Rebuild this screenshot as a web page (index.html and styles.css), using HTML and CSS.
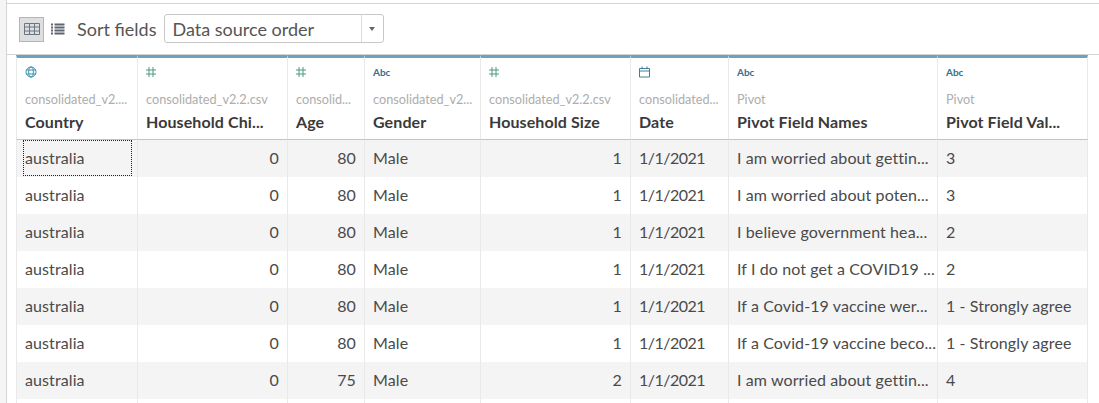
FILE: index.html
```html
<!DOCTYPE html>
<html lang="en">
<head>
    <meta charset="UTF-8">
    <title>Data source</title>
    <link rel="stylesheet" href="styles.css">
</head>
<body>

<div class="gutter"></div>

<div class="main">
    <div class="toolbar">
        <button class="view-btn active">
            <svg width="16" height="12" viewBox="0 0 16 12"><path d="M.5.5h15v11H.5zM.5 4h15M.5 8h15M5.5.5v11M10.5.5v11" fill="none" stroke="#6b7480"/></svg>
        </button>
        <button class="view-btn">
            <svg width="14" height="12" viewBox="0 0 14 12"><path d="M0 1.5h2M0 4.5h2M0 7.5h2M0 10.5h2M3.500 1.500h10M3.500 4.500h10M3.500 7.500h10M3.500 10.500h10" fill="none" stroke="#5c6570" stroke-width="2"/></svg>
        </button>
        <span class="sort-label">Sort fields</span>
        <div class="select">
            <span class="select-value">Data source order</span>
            <span class="select-arrow"></span>
        </div>
    </div>

    <div class="grid">
        <div class="col-head">
            <svg class="icon" width="12" height="12" viewBox="0 0 12 12"><g fill="none" stroke="#3f8fae"><circle cx="6" cy="6" r="5"/><ellipse cx="6" cy="6" rx="2.300" ry="5"/><path d="M1 4h10M1 8h10"/></g></svg>
            <div class="source">consolidated_v2....</div>
            <div class="name">Country</div>
        </div>
        <div class="col-head">
            <svg class="icon" width="10" height="10" viewBox="0 0 10 10"><path class="hash" d="M3 0v10M7 0v10M0 3h10M0 7h10"/></svg>
            <div class="source">consolidated_v2.2.csv</div>
            <div class="name">Household Chi...</div>
        </div>
        <div class="col-head">
            <svg class="icon" width="10" height="10" viewBox="0 0 10 10"><path class="hash" d="M3 0v10M7 0v10M0 3h10M0 7h10"/></svg>
            <div class="source">consolid...</div>
            <div class="name">Age</div>
        </div>
        <div class="col-head">
            <span class="abc">Abc</span>
            <div class="source">consolidated_v2...</div>
            <div class="name">Gender</div>
        </div>
        <div class="col-head">
            <svg class="icon" width="10" height="10" viewBox="0 0 10 10"><path class="hash" d="M3 0v10M7 0v10M0 3h10M0 7h10"/></svg>
            <div class="source">consolidated_v2.2.csv</div>
            <div class="name">Household Size</div>
        </div>
        <div class="col-head">
            <svg class="icon" width="11" height="11" viewBox="0 0 11 11"><path d="M1 2h9.500v8.500H.5V2zM.5 4.500h10M3 0v2.500M8 0v2.500" fill="none" stroke="#3f7f96"/></svg>
            <div class="source">consolidated...</div>
            <div class="name">Date</div>
        </div>
        <div class="col-head">
            <span class="abc">Abc</span>
            <div class="source">Pivot</div>
            <div class="name">Pivot Field Names</div>
        </div>
        <div class="col-head">
            <span class="abc">Abc</span>
            <div class="source">Pivot</div>
            <div class="name">Pivot Field Val...</div>
        </div>

        <div class="cell odd"><span class="focus">australia</span></div>
        <div class="cell odd num">0</div>
        <div class="cell odd num">80</div>
        <div class="cell odd">Male</div>
        <div class="cell odd num">1</div>
        <div class="cell odd date">1/1/2021</div>
        <div class="cell odd">I am worried about gettin...</div>
        <div class="cell odd">3</div>

        <div class="cell">australia</div>
        <div class="cell num">0</div>
        <div class="cell num">80</div>
        <div class="cell">Male</div>
        <div class="cell num">1</div>
        <div class="cell date">1/1/2021</div>
        <div class="cell">I am worried about poten...</div>
        <div class="cell">3</div>

        <div class="cell odd">australia</div>
        <div class="cell odd num">0</div>
        <div class="cell odd num">80</div>
        <div class="cell odd">Male</div>
        <div class="cell odd num">1</div>
        <div class="cell odd date">1/1/2021</div>
        <div class="cell odd">I believe government hea...</div>
        <div class="cell odd">2</div>

        <div class="cell">australia</div>
        <div class="cell num">0</div>
        <div class="cell num">80</div>
        <div class="cell">Male</div>
        <div class="cell num">1</div>
        <div class="cell date">1/1/2021</div>
        <div class="cell">If I do not get a COVID19 ...</div>
        <div class="cell">2</div>

        <div class="cell odd">australia</div>
        <div class="cell odd num">0</div>
        <div class="cell odd num">80</div>
        <div class="cell odd">Male</div>
        <div class="cell odd num">1</div>
        <div class="cell odd date">1/1/2021</div>
        <div class="cell odd">If a Covid-19 vaccine wer...</div>
        <div class="cell odd">1 - Strongly agree</div>

        <div class="cell">australia</div>
        <div class="cell num">0</div>
        <div class="cell num">80</div>
        <div class="cell">Male</div>
        <div class="cell num">1</div>
        <div class="cell date">1/1/2021</div>
        <div class="cell">If a Covid-19 vaccine beco...</div>
        <div class="cell">1 - Strongly agree</div>

        <div class="cell odd">australia</div>
        <div class="cell odd num">0</div>
        <div class="cell odd num">75</div>
        <div class="cell odd">Male</div>
        <div class="cell odd num">2</div>
        <div class="cell odd date">1/1/2021</div>
        <div class="cell odd">I am worried about gettin...</div>
        <div class="cell odd">4</div>

        <div class="cell"></div>
        <div class="cell"></div>
        <div class="cell"></div>
        <div class="cell"></div>
        <div class="cell"></div>
        <div class="cell"></div>
        <div class="cell"></div>
        <div class="cell"></div>
    </div>
</div>

</body>
</html>
```

FILE: styles.css
```css
* {
    margin: 0;
    padding: 0;
    box-sizing: border-box;
}

body {
    display: flex;
    height: 403px;
    overflow: hidden;
    background: #fff;
    font-family: Lato, sans-serif;
    color: #333;
}

.gutter {
    width: 7px;
    background: #f5f5f5;
    border-right: 1px solid #d4d4d4;
}

.main {
    flex: 1;
    min-width: 0;
}

/* toolbar above the grid */
.toolbar {
    height: 52px;
    margin-top: 3px;
    display: flex;
    align-items: center;
    padding: 0 0 0 12px;
    border-top: 1px solid #d4d4d4;
    border-bottom: 1px solid #d4d4d4;
}

.view-btn {
    width: 25px;
    height: 25px;
    display: flex;
    align-items: center;
    justify-content: center;
    border: 1px solid transparent;
    background: none;
}

.view-btn.active {
    background: #dcdee0;
    border-color: #b5b5b5;
}

.view-btn + .view-btn {
    margin-left: 1px;
}

.sort-label {
    margin-left: 7px;
    font-size: 18px;
    color: #555;
}

.select {
    width: 220px;
    height: 29px;
    margin: 0 0 1px 8px;
    display: flex;
    align-items: center;
    border: 1px solid #c8c8c8;
    border-radius: 3px;
    font-size: 18px;
    color: #555;
}

.select-value {
    flex: 1;
    padding-left: 7px;
}

.select-arrow {
    width: 22px;
    height: 100%;
    border-left: 1px solid #dcdcdc;
    position: relative;
}

.select-arrow::after {
    content: "";
    position: absolute;
    left: 7px;
    top: 12px;
    border-left: 3px solid transparent;
    border-right: 3px solid transparent;
    border-top: 4px solid #666;
}

/* field grid */
.grid {
    width: 1071px;
    margin-left: 9px;
    display: grid;
    grid-template-columns: 122px 150px 77px 116px 150px 98px 209px 150px;
    grid-template-rows: 85px repeat(7, 37px) 4px;
}

.col-head {
    padding: 8px 0 0 8px;
    border-top: 3px solid #6ba3bc;
    border-right: 1px solid #e9e9e9;
    border-bottom: 1px solid #c4c4c4;
    overflow: hidden;
    white-space: nowrap;
}

.col-head:first-child {
    border-left: 1px solid #e9e9e9;
}

.icon {
    display: block;
    height: 12px;
}

.hash {
    fill: none;
    stroke: #4c9a7f;
}

.abc {
    display: block;
    height: 12px;
    font-size: 10px;
    line-height: 12px;
    font-weight: 700;
    color: #35708a;
}

.source {
    margin-top: 13px;
    font-size: 12.7px;
    line-height: 16px;
    color: #adadad;
}

.name {
    margin-top: 5px;
    font-size: 16px;
    line-height: 20px;
    font-weight: 700;
    letter-spacing: 0.1px;
    color: #3a3a3a;
}

.cell {
    padding: 0 8px;
    line-height: 35px;
    font-size: 16px;
    letter-spacing: 0.1px;
    white-space: nowrap;
    overflow: hidden;
    color: #4a4a4a;
    border-right: 1px solid #e9e9e9;
}

.cell:nth-child(8n+1) {
    border-left: 1px solid #e9e9e9;
    position: relative;
}

.cell.odd {
    background: #f4f4f4;
}

.cell.num {
    text-align: right;
}

.cell.date {
    letter-spacing: -0.5px;
}

.focus::after {
    content: "";
    position: absolute;
    left: 6px;
    right: 5px;
    top: 0;
    bottom: 1px;
    border: 1px dotted #222;
}
```
